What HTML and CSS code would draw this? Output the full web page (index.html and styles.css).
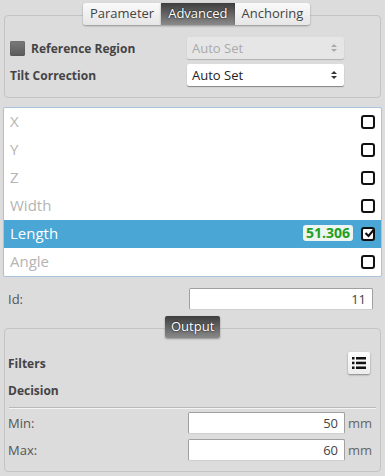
FILE: index.html
```html
<!DOCTYPE html>
<html lang="en">
<head>
    <meta charset="UTF-8">
    <title>Tool Settings</title>
    <link rel="stylesheet" href="styles.css">
</head>
<body>
    <div class="panel top-panel">
        <div class="tabs">
            <span class="tab">Parameter</span><span class="tab active">Advanced</span><span class="tab">Anchoring</span>
        </div>
        <div class="row">
            <label class="bold check-label"><span class="checkbox-gray"></span>Reference Region</label>
            <div class="select disabled">Auto Set<span class="arrows"></span></div>
        </div>
        <div class="row">
            <label class="bold">Tilt Correction</label>
            <div class="select">Auto Set<span class="arrows"></span></div>
        </div>
    </div>

    <div class="list">
        <div class="item"><span>X</span><span class="box"></span></div>
        <div class="item"><span>Y</span><span class="box"></span></div>
        <div class="item"><span>Z</span><span class="box"></span></div>
        <div class="item"><span>Width</span><span class="box"></span></div>
        <div class="item selected">
            <span>Length</span>
            <span class="right"><span class="value">51.306</span><span class="box checked">
                <svg width="11" height="10" viewBox="0 0 11 10"><path d="M1.5 5 L4.5 8 L10 1.5" fill="none" stroke="#111" stroke-width="2.2"/></svg>
            </span></span>
        </div>
        <div class="item"><span>Angle</span><span class="box"></span></div>
    </div>

    <div class="row id-row">
        <label>Id:</label>
        <div class="input wide">11</div>
    </div>

    <div class="panel bottom-panel">
        <div class="tabs out-tabs">
            <span class="tab active">Output</span>
        </div>
        <div class="row filters-row">
            <label class="bold">Filters</label>
            <button class="list-btn">
                <svg width="14" height="12" viewBox="0 0 14 12">
                    <rect x="0" y="0" width="2.5" height="2.5" fill="#111"/>
                    <rect x="4" y="0" width="10" height="2.5" fill="#111"/>
                    <rect x="0" y="4.7" width="2.5" height="2.5" fill="#111"/>
                    <rect x="4" y="4.7" width="10" height="2.5" fill="#111"/>
                    <rect x="0" y="9.5" width="2.5" height="2.5" fill="#111"/>
                    <rect x="4" y="9.5" width="10" height="2.5" fill="#111"/>
                </svg>
            </button>
        </div>
        <div class="row decision-row">
            <label class="bold">Decision</label>
        </div>
        <hr>
        <div class="row num-row">
            <label>Min:</label>
            <div class="field"><div class="input">50</div><span class="unit">mm</span></div>
        </div>
        <div class="row num-row">
            <label>Max:</label>
            <div class="field"><div class="input">60</div><span class="unit">mm</span></div>
        </div>
    </div>
</body>
</html>
```

FILE: styles.css
```css
* {
    box-sizing: border-box;
}

body {
    margin: 0;
    width: 385px;
    height: 476px;
    background: #dcdcdc;
    font-family: 'Open Sans', sans-serif;
    font-size: 13px;
    color: #555;
    overflow: hidden;
}

.panel {
    position: relative;
    margin: 0 4px;
    border: 1px solid #c4c4c4;
    border-radius: 4px;
}

.top-panel {
    margin-top: 15px;
    height: 83px;
    padding: 21px 36px 0 5px;
}

.tabs {
    position: absolute;
    top: -13px;
    left: 78px;
    display: flex;
}

.tab {
    height: 22px;
    line-height: 21px;
    padding: 0 7px;
    background: linear-gradient(#fafafa, #e6e6e6);
    color: #444;
    box-shadow: 0 1px 2px rgba(0, 0, 0, 0.35);
    font-size: 13px;
}

.tab:first-child {
    border-radius: 3px 0 0 3px;
}

.tab:last-child {
    border-radius: 0 3px 3px 0;
}

.tab.active {
    background: linear-gradient(#3e3e3e, #8a8a8a);
    color: #fff;
    text-shadow: 0 0 2px #000;
}

.row {
    display: flex;
    align-items: center;
    justify-content: space-between;
}

.top-panel .row {
    height: 22px;
    margin-bottom: 5px;
}

.bold {
    font-weight: bold;
    font-size: 12px;
    color: #444;
}

.check-label {
    display: flex;
    align-items: center;
}

.checkbox-gray {
    width: 15px;
    height: 15px;
    margin-right: 6px;
    border-radius: 2px;
    background: linear-gradient(#7a7a7a, #5a5a5a);
    box-shadow: inset 0 0 1px #333;
}

.select {
    position: relative;
    width: 157px;
    height: 22px;
    line-height: 22px;
    padding-left: 5px;
    background: #fff;
    border-radius: 2px;
    box-shadow: 0 1px 1px rgba(0, 0, 0, 0.4);
    color: #222;
}

.select.disabled {
    background: #e6e6e6;
    color: #aaa;
    box-shadow: 0 1px 1px rgba(0, 0, 0, 0.2);
}

.arrows {
    position: absolute;
    right: 7px;
    top: 7px;
    width: 0;
    height: 0;
    border-left: 3px solid transparent;
    border-right: 3px solid transparent;
    border-bottom: 3px solid #333;
}

.arrows::after {
    content: "";
    position: absolute;
    left: -3px;
    top: 5px;
    border-left: 3px solid transparent;
    border-right: 3px solid transparent;
    border-top: 3px solid #333;
}

.disabled .arrows,
.disabled .arrows::after {
    border-bottom-color: #aaa;
    border-top-color: #aaa;
}

.list {
    margin: 9px 3px 0;
    height: 170px;
    background: #fff;
    border: 1px solid #a9c2dc;
    border-radius: 2px;
}

.item {
    display: flex;
    align-items: center;
    justify-content: space-between;
    height: 28px;
    padding: 0 6px 0 6px;
    font-size: 15px;
    color: #b4b4b4;
}

.item span:first-child {
    margin-top: -2px;
}

.item.selected {
    background: #4aa6d4;
    color: #fff;
}

.right {
    display: flex;
    align-items: center;
}

.item .right {
    margin-top: 0;
}

.value {
    margin-right: 8px;
    padding: 0 3px;
    height: 16px;
    line-height: 16px;
    background: #eef4f0;
    border-radius: 3px;
    color: #22a022;
    font-weight: bold;
    font-size: 14px;
}

.box {
    display: flex;
    align-items: center;
    justify-content: center;
    width: 14px;
    height: 14px;
    border: 2px solid #111;
    border-radius: 3px;
    background: #fff;
}

.box svg {
    margin: -2px -2px 0 0;
}

.id-row {
    margin: 11px 12px 0 8px;
    height: 22px;
}

.input {
    width: 157px;
    height: 22px;
    line-height: 21px;
    padding-right: 6px;
    text-align: right;
    background: #fff;
    border: 1px solid #a0a0a0;
    border-bottom-color: #d0d0d0;
    border-radius: 2px;
    color: #444;
}

.input.wide {
    width: 184px;
}

.bottom-panel {
    margin-top: 18px;
    height: 144px;
    padding: 23px 10px 0 3px;
}

.out-tabs {
    left: 160px;
    top: -13px;
}

.out-tabs .tab {
    border-radius: 2px;
    padding: 0 6px;
}

.filters-row {
    height: 22px;
}

.list-btn {
    width: 22px;
    height: 22px;
    margin-right: 0;
    padding: 0;
    display: flex;
    align-items: center;
    justify-content: center;
    border: none;
    border-radius: 2px;
    background: linear-gradient(#fdfdfd, #ececec);
    box-shadow: 0 1px 2px rgba(0, 0, 0, 0.4);
}

.decision-row {
    height: 22px;
    margin-top: 5px;
}

hr {
    margin: 6px -6px 3px 1px;
    border: none;
    border-top: 1px solid #b8b8b8;
    border-bottom: 1px solid #f4f4f4;
}

.num-row {
    height: 22px;
    margin-bottom: 5px;
}

.field {
    display: flex;
    align-items: center;
}

.unit {
    margin-left: 3px;
    width: 22px;
    color: #666;
}
```
